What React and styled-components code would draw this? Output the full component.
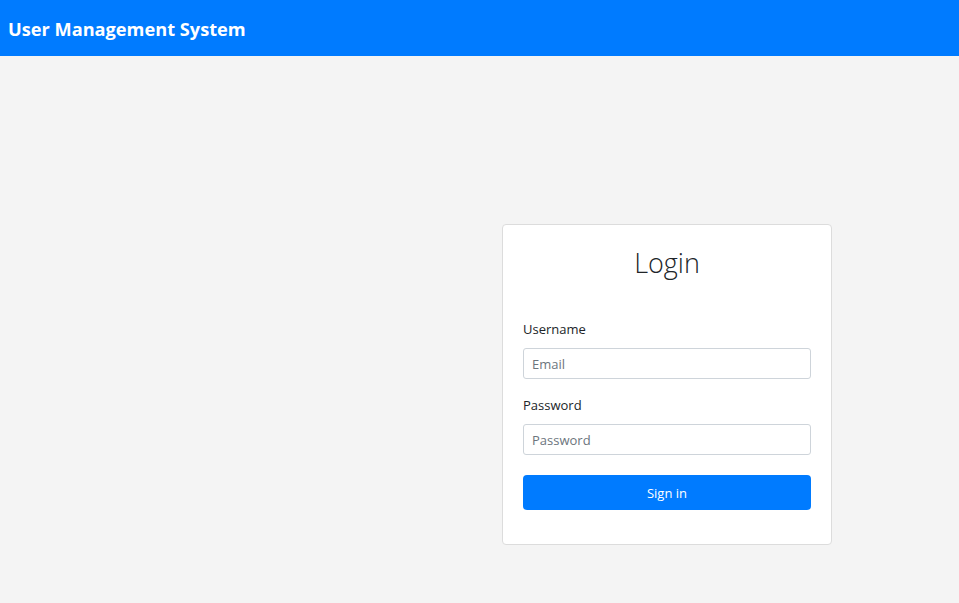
import React from "react";
import styled, { createGlobalStyle } from "styled-components";

const Global = createGlobalStyle`
  html, body { margin: 0; padding: 0; }
  body {
    background: #f4f4f4;
    font-family: "Open Sans", "Noto Sans", "Liberation Sans", sans-serif;
    color: #212529;
  }
  * { box-sizing: border-box; }
`;

const Page = styled.div`
  min-height: 603px;
  display: flex;
  flex-direction: column;
`;

const Navbar = styled.header`
  height: 56px;
  background: #007bff;
  display: flex;
  align-items: center;
  padding: 2px 8px 0;
`;

const Brand = styled.h1`
  margin: 0;
  color: #fff;
  font-size: 18.2px;
  font-weight: 700;
`;

const Main = styled.main`
  flex: 1;
  display: flex;
  justify-content: flex-end;
  align-items: flex-start;
  padding: 168px 127px 0 0;
`;

const Card = styled.form`
  width: 330px;
  background: #fff;
  border: 1px solid #dcdcdc;
  border-radius: 4px;
  padding: 21px 20px 34px;
  display: flex;
  flex-direction: column;
`;

const Title = styled.h2`
  margin: 0 0 39px;
  text-align: center;
  font-size: 27px;
  font-weight: 300;
  line-height: 34px;
  color: #212529;
`;

const Field = styled.div`
  display: flex;
  flex-direction: column;
  margin-bottom: ${(p) => p.$mb || 16}px;
`;

const Label = styled.label`
  font-size: 13px;
  line-height: 21px;
  margin-bottom: 8px;
`;

const Input = styled.input`
  height: 31px;
  border: 1px solid #ced4da;
  border-radius: 3px;
  padding: 4px 8px;
  font-family: inherit;
  font-size: 13px;
  color: #495057;
  &::placeholder { color: #6c757d; }
`;

const Button = styled.button`
  height: 35px;
  border: none;
  border-radius: 4px;
  background: #007bff;
  color: #fff;
  font-family: inherit;
  font-size: 13px;
  cursor: pointer;
`;

export default function App() {
  return (
    <Page>
      <Global />
      <Navbar>
        <Brand>User Management System</Brand>
      </Navbar>
      <Main>
        <Card onSubmit={(e) => e.preventDefault()}>
          <Title>Login</Title>
          <Field>
            <Label>Username</Label>
            <Input placeholder="Email" />
          </Field>
          <Field $mb={20}>
            <Label>Password</Label>
            <Input type="password" placeholder="Password" />
          </Field>
          <Button type="submit">Sign in</Button>
        </Card>
      </Main>
    </Page>
  );
}
